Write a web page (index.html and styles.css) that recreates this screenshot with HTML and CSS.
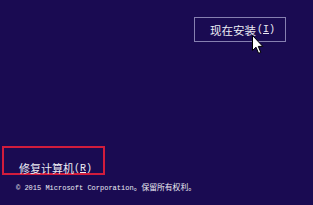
FILE: index.html
```html
<!DOCTYPE html>
<html lang="zh-CN">
<head>
<meta charset="utf-8">
<title>Windows 安装程序</title>
<link rel="stylesheet" href="styles.css">
</head>
<body>
<div class="screen">
  <div class="top">
    <div class="install">现在安装<span class="key">(<u>I</u>)</span></div>
    <svg class="cursor" width="12" height="19" viewBox="0 0 12 19">
      <path d="M0.5 0.5 L0.5 15.5 L4 12.2 L6.6 18.3 L8.8 17.4 L6.3 11.4 L10.8 11.4 Z" fill="#ffffff" stroke="#000000" stroke-width="1"/>
    </svg>
  </div>
  <div class="bottom">
    <div class="repair">修复计算机<span class="key">(<u>R</u>)</span></div>
    <div class="copyright">© 2015 Microsoft Corporation<span class="cjk">。保留所有权利。</span></div>
  </div>
</div>
</body>
</html>
```
FILE: styles.css
```css
html, body {
  margin: 0;
  padding: 0;
  background: #1a0b52;
}
.screen {
  width: 313px;
  height: 205px;
  box-sizing: border-box;
  padding: 17px 27px 12px 2px;
  display: flex;
  flex-direction: column;
  justify-content: space-between;
  color: #ecebf4;
  font-family: "Noto Sans CJK SC", "Liberation Sans", sans-serif;
}
.top {
  display: flex;
  justify-content: flex-end;
  position: relative;
}
.install {
  width: 92px;
  height: 25px;
  box-sizing: border-box;
  border: 1px solid #8680b0;
  display: flex;
  align-items: center;
  padding-left: 15px;
  font-size: 11.5px;
  line-height: 12px;
}
.key {
  font-family: "Liberation Mono", monospace;
  font-size: 10px;
  margin-left: 1px;
}
.key u {
  text-decoration-thickness: 1px;
  text-underline-offset: 1px;
}
.cursor {
  position: absolute;
  left: 250px;
  top: 18px;
}
.bottom {
  display: flex;
  flex-direction: column;
}
.repair {
  width: 103px;
  height: 29px;
  box-sizing: border-box;
  border: 2px solid #d21c3c;
  display: flex;
  align-items: flex-start;
  padding: 15px 0 0 15px;
  font-size: 11px;
  line-height: 11px;
}
.repair .key {
  font-size: 10px;
  margin-left: 0;
}
.copyright {
  margin-top: 7px;
  padding-left: 14px;
  font-family: "Liberation Mono", "Noto Sans CJK SC", monospace;
  font-size: 7px;
  line-height: 10px;
  white-space: nowrap;
}
.cjk {
  font-family: "Noto Sans CJK SC", sans-serif;
  font-size: 7.8px;
}
```
